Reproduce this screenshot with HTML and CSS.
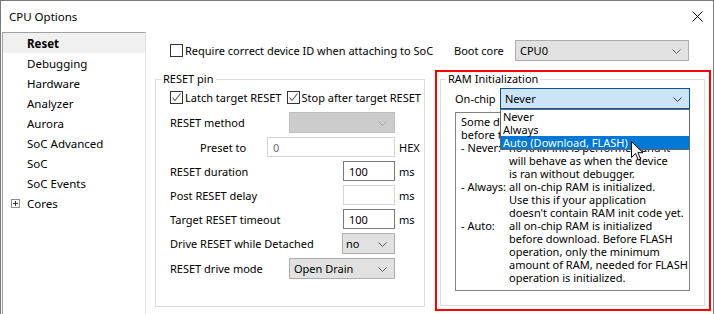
FILE: index.html
```html
<!DOCTYPE html>
<html lang="en">
<head>
      <meta charset="UTF-8">
      <meta name="viewport" content="width=device-width, initial-scale=1.0">
      <title>CPU Options</title>
      <link rel="stylesheet" href="styles.css">
</head>
<body>
      <div class="window">
            <div class="title-bar">
                  <span>CPU Options</span>
                  <svg class="close" width="11" height="11" viewBox="0 0 11 11">
                        <path d="M0.5 0.5 L10.5 10.5 M10.5 0.5 L0.5 10.5" stroke="#000" stroke-width="1" fill="none"/>
                  </svg>
            </div>
            <div class="main">
                  <ul class="nav">
                        <li class="active">Reset</li>
                        <li>Debugging</li>
                        <li>Hardware</li>
                        <li>Analyzer</li>
                        <li>Aurora</li>
                        <li>SoC Advanced</li>
                        <li>SoC</li>
                        <li>SoC Events</li>
                        <li class="has-children"><span class="expand"></span>Cores</li>
                  </ul>

                  <div class="content">
                        <div class="top-left">
                              <label class="check"><span class="box"></span>Require correct device ID when attaching to SoC</label>
                        </div>
                        <div class="top-right">
                              <span class="boot-label">Boot core</span>
                              <div class="combo boot">CPU0
                                    <svg class="arrow" width="9" height="5" viewBox="0 0 9 5"><polyline points="0.5,0.5 4.5,4.5 8.5,0.5" fill="none" stroke="#606060"/></svg>
                              </div>
                        </div>

                        <fieldset class="group reset-pin">
                              <legend>RESET pin</legend>
                              <div class="checks">
                                    <label class="check first"><span class="box checked"><svg width="11" height="11" viewBox="0 0 11 11"><polyline points="1.5,5.5 4,8.5 9.5,1.5" fill="none" stroke="#555" stroke-width="1.1"/></svg></span>Latch target RESET</label>
                                    <label class="check"><span class="box checked"><svg width="11" height="11" viewBox="0 0 11 11"><polyline points="1.5,5.5 4,8.5 9.5,1.5" fill="none" stroke="#555" stroke-width="1.1"/></svg></span>Stop after target RESET</label>
                              </div>
                              <div class="row">
                                    <span class="label">RESET method</span>
                                    <div class="combo disabled wide">
                                          <svg class="arrow" width="9" height="5" viewBox="0 0 9 5"><polyline points="0.5,0.5 4.5,4.5 8.5,0.5" fill="none" stroke="#a8a8a8"/></svg>
                                    </div>
                                    <span class="unit"></span>
                              </div>
                              <div class="row">
                                    <span class="label indent">Preset to</span>
                                    <div class="input disabled preset">0</div>
                                    <span class="unit">HEX</span>
                              </div>
                              <div class="row">
                                    <span class="label">RESET duration</span>
                                    <div class="input small">100</div>
                                    <span class="unit">ms</span>
                              </div>
                              <div class="row">
                                    <span class="label">Post RESET delay</span>
                                    <div class="input disabled small"></div>
                                    <span class="unit">ms</span>
                              </div>
                              <div class="row">
                                    <span class="label">Target RESET timeout</span>
                                    <div class="input small">100</div>
                                    <span class="unit">ms</span>
                              </div>
                              <div class="row">
                                    <span class="label">Drive RESET while Detached</span>
                                    <div class="combo small">no
                                          <svg class="arrow" width="9" height="5" viewBox="0 0 9 5"><polyline points="0.5,0.5 4.5,4.5 8.5,0.5" fill="none" stroke="#606060"/></svg>
                                    </div>
                                    <span class="unit"></span>
                              </div>
                              <div class="row">
                                    <span class="label">RESET drive mode</span>
                                    <div class="combo wide">Open Drain
                                          <svg class="arrow" width="9" height="5" viewBox="0 0 9 5"><polyline points="0.5,0.5 4.5,4.5 8.5,0.5" fill="none" stroke="#606060"/></svg>
                                    </div>
                                    <span class="unit"></span>
                              </div>
                        </fieldset>

                        <div class="highlight">
                              <fieldset class="group ram">
                                    <legend>RAM Initialization</legend>
                                    <div class="onchip-row">
                                          <span class="onchip-label">On-chip</span>
                                          <div class="combo-wrap">
                                                <div class="combo focused">Never
                                                      <svg class="arrow" width="9" height="5" viewBox="0 0 9 5"><polyline points="0.5,0.5 4.5,4.5 8.5,0.5" fill="none" stroke="#404040"/></svg>
                                                </div>
                                                <ul class="dropdown">
                                                      <li>Never</li>
                                                      <li>Always</li>
                                                      <li class="selected">Auto (Download, FLASH)</li>
                                                </ul>
                                                <svg class="cursor" width="13" height="21" viewBox="0 0 13 21">
                                                      <path d="M0.5 0.5 L0.5 16.5 L4.5 12.5 L7.3 19 L9.6 18 L6.9 11.7 L12 11.7 Z" fill="#fff" stroke="#000" stroke-width="1" stroke-linejoin="miter"/>
                                                </svg>
                                          </div>
                                    </div>
                                    <div class="description">
                                          <div class="full">Some devices require RAM to be initialized</div>
                                          <div class="full">before the application is downloaded.</div>
                                          <div>- Never:</div><div>no RAM init is performed and it</div>
                                          <div></div><div>will behave as when the device</div>
                                          <div></div><div>is ran without debugger.</div>
                                          <div>- Always:</div><div>all on-chip RAM is initialized.</div>
                                          <div></div><div>Use this if your application</div>
                                          <div></div><div>doesn't contain RAM init code yet.</div>
                                          <div>- Auto:</div><div>all on-chip RAM is initialized</div>
                                          <div></div><div>before download. Before FLASH</div>
                                          <div></div><div>operation, only the minimum</div>
                                          <div></div><div>amount of RAM, needed for FLASH</div>
                                          <div></div><div>operation is initialized.</div>
                                    </div>
                              </fieldset>
                        </div>
                  </div>
            </div>
      </div>
</body>
</html>
```

FILE: styles.css
```css
*{
      padding: 0;
      margin: 0;
      box-sizing: border-box;
}

body{
      font-family: "Noto Sans", sans-serif;
      font-size: 11px;
      color: #000;
      background-color: #fff;
}

.window{
      width: 714px;
      height: 314px;
      border: 1px solid #7a7a7a;
      border-bottom: none;
      display: flex;
      flex-direction: column;
      overflow: hidden;
}

.title-bar{
      height: 31px;
      flex-shrink: 0;
      display: flex;
      align-items: center;
      justify-content: space-between;
      padding: 0 10px 0 8px;
      font-size: 11.5px;
}

.main{
      flex: 1;
      display: flex;
      padding-left: 1px;
}

/* lista da esquerda */
.nav{
      list-style: none;
      width: 144px;
      flex-shrink: 0;
      border-top: 1px solid #a0a0a0;
      border-left: 1px solid #a0a0a0;
      border-right: 1px solid #e3e3e3;
}

.nav li{
      height: 20px;
      display: flex;
      align-items: center;
      padding-left: 24px;
      font-size: 11.5px;
}

.nav .active{
      background-color: #f0f0f0;
      font-weight: 700;
}

.nav .has-children{
      padding-left: 8px;
}

.expand{
      width: 9px;
      height: 9px;
      border: 1px solid #919191;
      margin-right: 7px;
      position: relative;
}

.expand::before, .expand::after{
      content: "";
      position: absolute;
      background-color: #333;
}

.expand::before{
      left: 1px;
      top: 3px;
      width: 5px;
      height: 1px;
}

.expand::after{
      left: 3px;
      top: 1px;
      width: 1px;
      height: 5px;
}

/* area principal */
.content{
      flex: 1;
      min-width: 0;
      display: grid;
      grid-template-columns: 270px 276px;
      grid-template-rows: 21px auto;
      column-gap: 10px;
      row-gap: 9px;
      padding: 8px 0 0 9px;
      align-items: start;
}

.content > *{
      min-width: 0;
}

.top-left{
      height: 21px;
      display: flex;
      align-items: center;
      padding-left: 15px;
}

.top-right{
      height: 21px;
      display: flex;
      align-items: center;
      padding-left: 19px;
}

.boot-label{
      width: 61px;
      flex-shrink: 0;
}

.check{
      display: flex;
      align-items: center;
      white-space: nowrap;
}

.box{
      width: 13px;
      height: 13px;
      flex-shrink: 0;
      border: 1px solid #333;
      background-color: #fff;
      margin-right: 2px;
      display: flex;
      align-items: center;
      justify-content: center;
}

/* combos e inputs */
.combo{
      position: relative;
      height: 21px;
      flex-shrink: 0;
      display: flex;
      align-items: center;
      padding-left: 4px;
      background-color: #e1e1e1;
      border: 1px solid #adadad;
      white-space: nowrap;
}

.arrow{
      position: absolute;
      right: 7px;
      top: 8px;
}

.combo.boot{
      width: 174px;
}

.combo.wide{
      width: 106px;
}

.combo.small{
      width: 53px;
      padding-left: 3px;
}

.combo.disabled{
      background-color: #cccccc;
      border-color: #bfbfbf;
}

.combo.focused{
      background-color: #cce4f7;
      border-color: #005499;
}

.input{
      height: 20px;
      flex-shrink: 0;
      display: flex;
      align-items: center;
      padding-left: 5px;
      border: 1px solid #7a7a7a;
      background-color: #fff;
}

.input.small{
      width: 52px;
}

.input.preset{
      width: 128px;
}

.input.disabled{
      border-color: #d5d5d5;
      color: #6d6d6d;
}

/* caixas de grupo */
.group{
      border: 1px solid #dcdcdc;
      min-width: 0;
}

.group legend{
      font-size: 11px;
      line-height: 14px;
      padding: 0 2px;
      margin-left: -9px;
}

.reset-pin{
      margin-top: 2px;
      height: 235px;
      padding: 5px 3px 0 14px;
}

.checks{
      display: flex;
      height: 13px;
      align-items: center;
}

.check.first{
      width: 120px;
}

.checks + .row{
      margin-top: 8px;
}

.row{
      display: flex;
      align-items: center;
      margin-top: 4px;
}

.row .label{
      flex: 1;
      min-width: 0;
      white-space: nowrap;
}

.row .label.indent{
      padding-left: 30px;
}

.unit{
      width: 26px;
      flex-shrink: 0;
      padding-left: 4px;
}

.highlight{
      height: 241px;
      border: 2px solid #ff0000;
      padding: 0 4px 3px 3px;
}

.ram{
      height: 234px;
      padding: 2px 14px 0 14px;
}

.onchip-row{
      display: flex;
      align-items: center;
}

.onchip-label{
      width: 45px;
      flex-shrink: 0;
}

.combo-wrap{
      flex: 1;
      position: relative;
}

.dropdown{
      list-style: none;
      position: absolute;
      top: 21px;
      left: 0;
      right: 0;
      background-color: #fff;
      border: 1px solid #646464;
      z-index: 2;
}

.dropdown li{
      height: 13px;
      line-height: 13px;
      padding-left: 2px;
}

.dropdown .selected{
      background-color: #0078d7;
      color: #fff;
}

.cursor{
      position: absolute;
      left: 131px;
      top: 53px;
      z-index: 3;
}

.description{
      margin-top: 3px;
      height: 179px;
      border: 1px solid #828282;
      padding: 2px 4px 0 5px;
      line-height: 13px;
      display: grid;
      grid-template-columns: 48px auto;
      align-content: start;
      white-space: nowrap;
      overflow: hidden;
}

.description .full{
      grid-column: 1 / 3;
}
```
